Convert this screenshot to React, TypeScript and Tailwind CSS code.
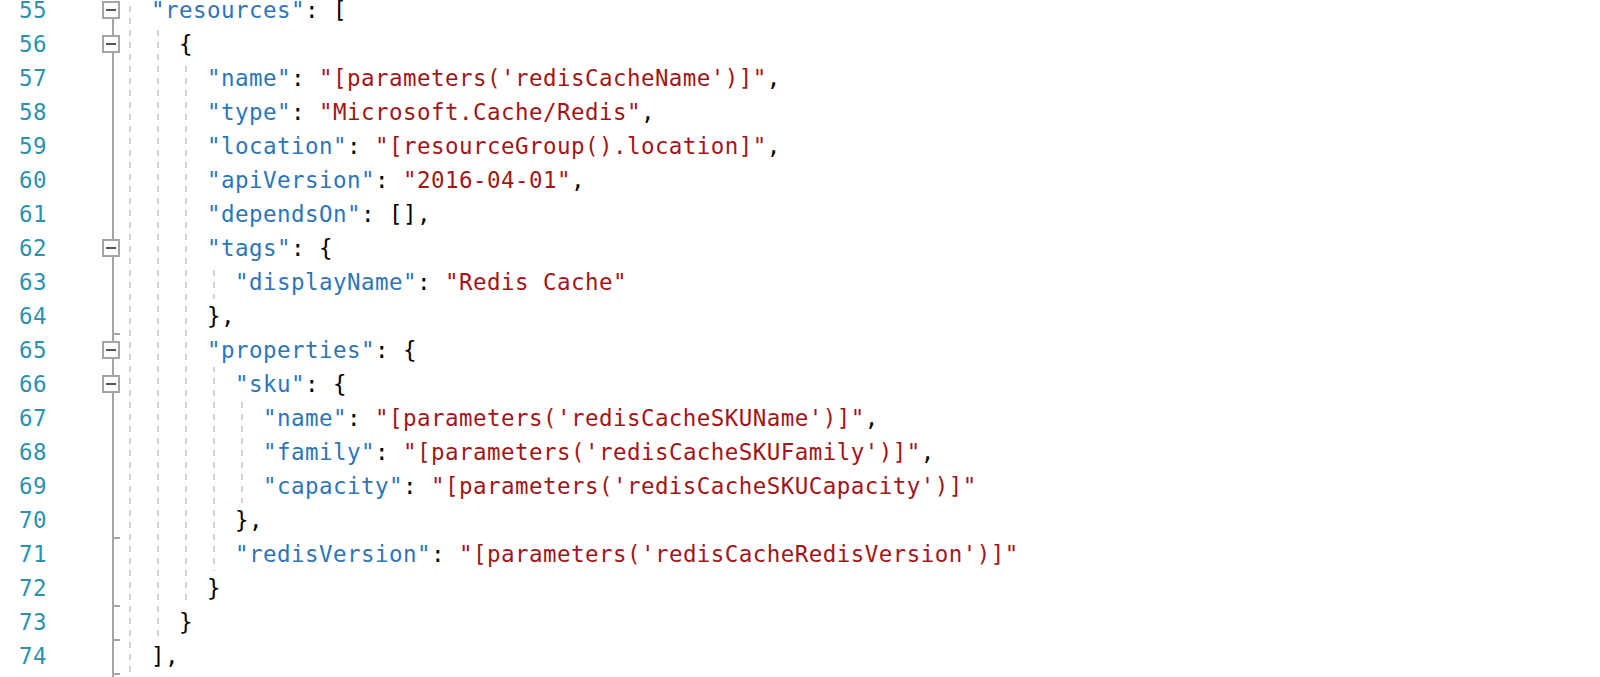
import React from "react";

type Kind = "k" | "s" | "p";
type Tok = [string, Kind];

const lines: { n: number; indent: number; toks: Tok[] }[] = [
  { n: 55, indent: 2, toks: [['"resources"', "k"], [": [", "p"]] },
  { n: 56, indent: 4, toks: [["{", "p"]] },
  { n: 57, indent: 6, toks: [['"name"', "k"], [": ", "p"], ["\"[parameters('redisCacheName')]\"", "s"], [",", "p"]] },
  { n: 58, indent: 6, toks: [['"type"', "k"], [": ", "p"], ['"Microsoft.Cache/Redis"', "s"], [",", "p"]] },
  { n: 59, indent: 6, toks: [['"location"', "k"], [": ", "p"], ['"[resourceGroup().location]"', "s"], [",", "p"]] },
  { n: 60, indent: 6, toks: [['"apiVersion"', "k"], [": ", "p"], ['"2016-04-01"', "s"], [",", "p"]] },
  { n: 61, indent: 6, toks: [['"dependsOn"', "k"], [": [],", "p"]] },
  { n: 62, indent: 6, toks: [['"tags"', "k"], [": {", "p"]] },
  { n: 63, indent: 8, toks: [['"displayName"', "k"], [": ", "p"], ['"Redis Cache"', "s"]] },
  { n: 64, indent: 6, toks: [["},", "p"]] },
  { n: 65, indent: 6, toks: [['"properties"', "k"], [": {", "p"]] },
  { n: 66, indent: 8, toks: [['"sku"', "k"], [": {", "p"]] },
  { n: 67, indent: 10, toks: [['"name"', "k"], [": ", "p"], ["\"[parameters('redisCacheSKUName')]\"", "s"], [",", "p"]] },
  { n: 68, indent: 10, toks: [['"family"', "k"], [": ", "p"], ["\"[parameters('redisCacheSKUFamily')]\"", "s"], [",", "p"]] },
  { n: 69, indent: 10, toks: [['"capacity"', "k"], [": ", "p"], ["\"[parameters('redisCacheSKUCapacity')]\"", "s"]] },
  { n: 70, indent: 8, toks: [["},", "p"]] },
  { n: 71, indent: 8, toks: [['"redisVersion"', "k"], [": ", "p"], ["\"[parameters('redisCacheRedisVersion')]\"", "s"]] },
  { n: 72, indent: 6, toks: [["}", "p"]] },
  { n: 73, indent: 4, toks: [["}", "p"]] },
  { n: 74, indent: 2, toks: [["],", "p"]] },
];

const kindClass: Record<Kind, string> = {
  k: "text-[#2e75b6]",
  s: "text-[#a31515]",
  p: "text-black",
};

const ROW = 34;
const H = ROW * 21;

// fold boxes at row indices
const boxes = [0, 1, 7, 10, 11];
// ticks at bottom of row indices
const ticks = [9, 15, 17, 18, 19];
// vertical line segments [y1, y2]
const vsegs: [number, number][] = [
  [26, 42],
  [60, 246],
  [264, 348],
  [366, 382],
  [400, H],
];

// guides: [column, y1, y2]
const guides: [number, number, number][] = [
  [0, 1, H],
  [2, ROW * 1, ROW * 19],
  [4, ROW * 2, ROW * 18],
  [6, ROW * 8, ROW * 9],
  [6, ROW * 11, ROW * 17],
  [8, ROW * 12, ROW * 15],
];

function FoldMargin() {
  return (
    <svg className="ml-[55px] shrink-0" width={20} height={H}>
      {vsegs.map(([a, b], i) => (
        <rect key={i} x={10} y={a} width={2} height={b - a} fill="#a5a5a5" />
      ))}
      {ticks.map((k) => (
        <rect key={k} x={10} y={ROW * (k + 1)} width={8} height={2} fill="#a5a5a5" />
      ))}
      {boxes.map((k) => (
        <g key={k}>
          <rect x={1} y={ROW * k + 9} width={16} height={16} fill="#ffffff" stroke="#a5a5a5" strokeWidth={2} />
          <rect x={4} y={ROW * k + 16} width={10} height={2} fill="#555555" />
        </g>
      ))}
    </svg>
  );
}

function Guides() {
  return (
    <svg className="pointer-events-none absolute left-0 top-0" width={260} height={H}>
      {guides.map(([c, y1, y2], i) => {
        const x = 7 + 14 * c;
        return (
          <line
            key={i}
            x1={x}
            x2={x}
            y1={y1}
            y2={y2}
            stroke="#d2d2d2"
            strokeWidth={2}
            strokeDasharray="6 6"
            strokeDashoffset={(((y1 - 1) % 12) + 12) % 12}
          />
        );
      })}
    </svg>
  );
}

export default function App() {
  return (
    <div className="h-[677px] w-[1600px] overflow-hidden bg-white font-['DejaVu_Sans_Mono',monospace] text-[22.5px] tracking-[0.45px]">
      <div className="-mt-[7px] flex">
        <div className="flex w-[47px] shrink-0 flex-col text-right text-[#2b91af]">
          {lines.map((l) => (
            <div key={l.n} className="h-[34px] leading-[34px]">
              {l.n}
            </div>
          ))}
        </div>
        <FoldMargin />
        <div className="relative ml-px flex-1">
          <div className="flex flex-col">
            {lines.map((l) => (
              <div key={l.n} className="h-[34px] whitespace-pre leading-[34px]">
                {" ".repeat(l.indent)}
                {l.toks.map(([t, k], i) => (
                  <span key={i} className={kindClass[k]}>
                    {t}
                  </span>
                ))}
              </div>
            ))}
          </div>
          <Guides />
        </div>
      </div>
    </div>
  );
}
